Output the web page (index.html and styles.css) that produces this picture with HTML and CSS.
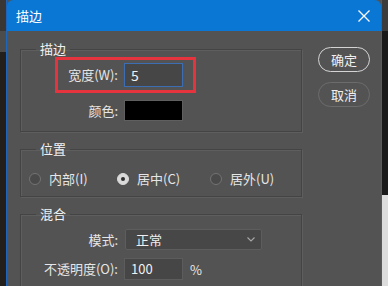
FILE: index.html
```html
<!DOCTYPE html>
<html>
<head>
<meta charset="utf-8">
<link rel="stylesheet" href="styles.css">
</head>
<body>
<div class="screen">
  <div class="side side-left">
    <div class="seg seg-a"></div>
    <div class="seg seg-b"></div>
    <div class="seg seg-c"></div>
  </div>
  <div class="dialog">
    <div class="titlebar">
      <span class="title">描边</span>
      <svg class="close" width="12" height="12" viewBox="0 0 12 12"><path d="M0.5 0.5 L11.5 11.5 M11.5 0.5 L0.5 11.5" stroke="#ffffff" stroke-width="1.3" fill="none"/></svg>
    </div>
    <div class="content">
      <div class="groups">
        <fieldset class="group g-stroke">
          <legend>描边</legend>
          <div class="row row-width">
            <span class="label">宽度(W):</span>
            <div class="field field-focus">5</div>
          </div>
          <div class="row row-color">
            <span class="label">颜色:</span>
            <div class="swatch"></div>
          </div>
        </fieldset>
        <fieldset class="group g-pos">
          <legend>位置</legend>
          <div class="radios">
            <div class="radio r1"><span class="dot"></span><span>内部(I)</span></div>
            <div class="radio r2 checked"><span class="dot"></span><span>居中(C)</span></div>
            <div class="radio r3"><span class="dot"></span><span>居外(U)</span></div>
          </div>
        </fieldset>
        <fieldset class="group g-blend">
          <legend>混合</legend>
          <div class="row row-mode">
            <span class="label">模式:</span>
            <div class="select"><span>正常</span>
              <svg class="chev" width="8" height="5" viewBox="0 0 8 5"><path d="M0.5 0.5 L4 4 L7.5 0.5" stroke="#a8a8a8" stroke-width="1.1" fill="none"/></svg>
            </div>
          </div>
          <div class="row row-opacity">
            <span class="label">不透明度(O):</span>
            <div class="field">100</div>
            <span class="unit">%</span>
          </div>
        </fieldset>
      </div>
      <div class="buttons">
        <div class="btn btn-default">确定</div>
        <div class="btn">取消</div>
      </div>
    </div>
  </div>
  <div class="side side-right">
    <div class="seg seg-ra"></div>
    <div class="seg seg-rb"></div>
    <div class="seg seg-rc"></div>
  </div>
</div>
</body>
</html>
```
FILE: styles.css
```css
html, body {
  margin: 0;
  padding: 0;
}
body {
  font-family: "Noto Sans CJK SC", "Liberation Sans", sans-serif;
  font-size: 13px;
  color: #e8e8e8;
  background: #1c1c1c;
}
.screen {
  display: flex;
  width: 388px;
  height: 286px;
  overflow: hidden;
}
.side {
  width: 6px;
  display: flex;
  flex-direction: column;
  flex: none;
  overflow: hidden;
}
.seg { flex: none; }
.seg-a { height: 31px; background: #3a3633; }
.seg-b { height: 21px; background: #4c4c4c; }
.seg-c { flex: 1; background: #231f1c; }
.seg-ra { height: 31px; background: #3c3c3c; }
.seg-rb { height: 164px; background: #1a1a1a; }
.seg-rc { flex: 1; background: #dcdcdc; }

.dialog {
  width: 374px;
  flex: none;
  border-left: 1px solid #1d66bd;
  border-right: 1px solid #1d66bd;
  background: #535353;
  display: flex;
  flex-direction: column;
}
.titlebar {
  height: 31px;
  background: #0a77d5;
  border-radius: 6px 6px 0 0;
  display: flex;
  align-items: center;
  justify-content: space-between;
  padding: 0 11px 0 9px;
  flex: none;
}
.title {
  color: #ffffff;
  font-size: 13px;
  line-height: 16px;
}
.close { display: block; }

.content {
  display: flex;
  padding: 10px 0 0 13px;
  gap: 16px;
}
.groups {
  width: 282px;
  display: flex;
  flex-direction: column;
  gap: 9px;
}
.group {
  margin: 0;
  padding: 0;
  border: 1px solid #444444;
  box-shadow: inset 1px 1px 0 #5e5e5e, 1px 1px 0 #5e5e5e;
  min-width: 0;
}
.group legend {
  margin-left: 15px;
  padding: 0 4px;
  line-height: 16px;
  font-size: 13px;
  color: #f2f2f2;
}
.g-stroke { padding-bottom: 10px; }
.g-pos { padding-bottom: 9px; }
.g-blend { padding-bottom: 20px; }

.row {
  display: flex;
  align-items: center;
  gap: 6px;
}
.label {
  width: 97px;
  text-align: right;
  color: #e6e6e6;
  line-height: 16px;
}
.row-width {
  margin-top: 6px;
  height: 24px;
  position: relative;
}
.row-width::after {
  content: "";
  position: absolute;
  left: 34px;
  top: -6px;
  width: 141px;
  height: 36px;
  box-sizing: border-box;
  border: 3px solid #e5343d;
}
.field {
  width: 59px;
  box-sizing: border-box;
  height: 22px;
  background: #464646;
  border: 1px solid #5c5c5c;
  padding-left: 6px;
  line-height: 20px;
  color: #f0f0f0;
  font-size: 13px;
}
.field-focus {
  height: 24px;
  line-height: 22px;
  border-color: #3d6db3;
  font-size: 14px;
}
.row-color { margin-top: 13px; }
.swatch {
  width: 59px;
  height: 21px;
  box-sizing: border-box;
  background: #000000;
  border: 1px solid #5f5f5f;
}

.radios {
  margin-top: 14px;
  height: 16px;
  display: flex;
  align-items: center;
  padding-left: 8px;
}
.radio {
  display: flex;
  align-items: center;
  gap: 8px;
  color: #e6e6e6;
  line-height: 16px;
}
.r1 { width: 88px; }
.r2 { width: 93px; }
.dot {
  width: 12px;
  height: 12px;
  flex: none;
  box-sizing: border-box;
  border-radius: 50%;
  border: 1px solid #737373;
  background: #4a4a4a;
  position: relative;
}
.radio.checked .dot {
  background: #dadada;
  border-color: #dadada;
}
.radio.checked .dot::after {
  content: "";
  position: absolute;
  left: 3px;
  top: 3px;
  width: 4px;
  height: 4px;
  border-radius: 50%;
  background: #2e2e2e;
}

.row-mode { margin-top: 7px; gap: 7px; }
.select {
  width: 137px;
  height: 21px;
  box-sizing: border-box;
  background: #474747;
  border: 1px solid #5d5d5d;
  border-radius: 2px;
  display: flex;
  align-items: center;
  justify-content: space-between;
  padding: 0 6px 0 10px;
  color: #f0f0f0;
}
.chev { display: block; }
.row-opacity { margin-top: 8px; }
.unit {
  margin-left: 1px;
  color: #e6e6e6;
}

.buttons {
  display: flex;
  flex-direction: column;
  gap: 10px;
  padding-top: 6px;
}
.btn {
  width: 52px;
  height: 25px;
  box-sizing: border-box;
  border: 1.5px solid #6c6c6c;
  border-radius: 13px;
  display: flex;
  align-items: center;
  justify-content: center;
  color: #f0f0f0;
  font-size: 13px;
}
.btn-default {
  border-color: #d4d4d4;
}
```
